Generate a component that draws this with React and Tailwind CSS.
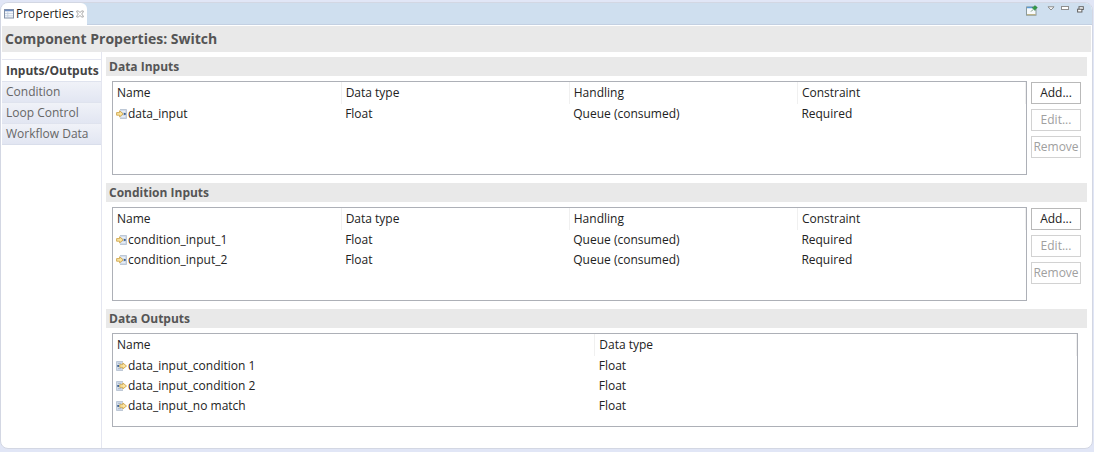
import React from "react";

function TableIcon() {
  return (
    <svg className="shrink-0" width="10" height="10" viewBox="0 0 10 10" aria-hidden="true">
      <rect x="0.5" y="0.5" width="9" height="8.5" fill="#f4f7fb" stroke="#8391a8" />
      <path d="M1 1.5h8" stroke="#6d8dc0" strokeWidth="1.4" />
      <path d="M1 4.5h8M1 6.8h8M3.8 2.5v6.3" stroke="#b9c5d8" strokeWidth="0.7" />
    </svg>
  );
}

function CloseIcon() {
  return (
    <svg width="8" height="8" viewBox="0 0 9 8" aria-hidden="true">
      <path
        d="M0.8 0.6h2l1.7 1.8 1.7-1.8h2v1L6.4 4l1.8 2.4v1h-2L4.5 5.6 2.8 7.4h-2v-1L2.6 4 0.8 1.6z"
        fill="#fff"
        stroke="#858585"
        strokeWidth="0.8"
      />
    </svg>
  );
}

function PinIcon() {
  return (
    <svg width="12" height="11" viewBox="0 0 12 11" aria-hidden="true">
      <rect x="0.5" y="2" width="9.5" height="8.2" fill="#f7fafc" stroke="#8a9a9c" />
      <path d="M1 2.5h6" stroke="#5b9bd5" strokeWidth="1.6" />
      <path d="M1 9.7h8.6" stroke="#b5a56b" strokeWidth="0.9" />
      <path d="M5 6.6l2.2-2.2" stroke="#6a8f72" strokeWidth="0.9" />
      <path d="M6 2.6l1.4-.4L8.8.6 11.4 2.6 9.6 4.2 9 5.6z" fill="#2f9a46" stroke="#39824a" strokeWidth="0.5" />
    </svg>
  );
}

function MenuIcon() {
  return (
    <svg width="8" height="5" viewBox="0 0 8 5" aria-hidden="true">
      <path d="M1 0.8h6L4 4z" fill="#fff" stroke="#8a8a8a" strokeWidth="1" />
    </svg>
  );
}

function MinimizeIcon() {
  return (
    <svg width="8" height="4" viewBox="0 0 8 4" aria-hidden="true">
      <rect x="0.5" y="0.5" width="7" height="3" fill="#fff" stroke="#8f8f8f" />
    </svg>
  );
}

function RestoreIcon() {
  return (
    <svg width="7" height="7" viewBox="0 0 7 7" aria-hidden="true">
      <rect x="2" y="0.7" width="4.3" height="2.8" fill="#fff" stroke="#606060" strokeWidth="1" />
      <rect x="0.6" y="3.2" width="4.3" height="2.8" fill="#fff" stroke="#606060" strokeWidth="1" />
    </svg>
  );
}

function InputIcon() {
  return (
    <svg className="shrink-0" width="11" height="10" viewBox="0 0 11 10" aria-hidden="true">
      <rect x="4" y="0.2" width="6.8" height="9.6" fill="#d3deed" />
      <path d="M4 0.6h6.4M4 9.4h6.4M10.4 0.6v8.8" stroke="#b1bccc" strokeWidth="0.8" fill="none" />
      <path d="M5.6 2.4h3.4M5.6 7.6h3.4" stroke="#eef2f8" strokeWidth="0.9" />
      <rect x="7.8" y="4" width="1.9" height="1.9" fill="#3d608f" />
      <path d="M0.6 3.6h3V1.8L7.2 4.9 3.6 7.9V6.2h-3z" fill="#fbe6a2" stroke="#cfa54c" strokeWidth="0.9" />
    </svg>
  );
}

function OutputIcon() {
  return (
    <svg className="shrink-0" width="11" height="10" viewBox="0 0 11 10" aria-hidden="true">
      <rect x="0.2" y="0.2" width="6.8" height="9.6" fill="#d3deed" />
      <path d="M7 0.6H0.6v8.8H7" stroke="#b1bccc" strokeWidth="0.8" fill="none" />
      <path d="M2 2.4h3.4M2 7.6h3.4" stroke="#9eacc0" strokeWidth="0.8" />
      <rect x="1.3" y="4" width="1.9" height="1.9" fill="#3d608f" />
      <path d="M3.8 3.7h3V1.9l3.7 3.1-3.7 3V6.3h-3z" fill="#fbe6a2" stroke="#cfa54c" strokeWidth="0.9" />
    </svg>
  );
}

function SectionTitle({ children }) {
  return (
    <h2 className="h-[19px] bg-[#e9e9e9] pl-[3px] leading-[19px] font-bold text-[#555]">
      {children}
    </h2>
  );
}

function DataTable({ label, columns, rows, icon: Icon }) {
  return (
    <div className="h-[94px] min-w-0 flex-1 border border-[#adb0b7] bg-white">
      <table aria-label={label} className="w-full table-fixed border-collapse text-left">
        <thead>
          <tr className="h-[22px]">
            {columns.map((c) => (
              <th key={c} className="border-r border-[#f0f0f0] p-0 pl-1 font-normal leading-[22px]">
                {c}
              </th>
            ))}
          </tr>
        </thead>
        <tbody>
          {rows.map((row) => (
            <tr key={row[0]} className="h-5">
              {row.map((cell, i) => (
                <td key={i} className={i === 0 ? "p-0 pl-[3px]" : "p-0 pl-1"}>
                  <span className="flex items-center gap-px whitespace-nowrap leading-5">
                    {i === 0 && <Icon />}
                    {cell}
                  </span>
                </td>
              ))}
            </tr>
          ))}
        </tbody>
      </table>
    </div>
  );
}

function ActionButton({ children, disabled }) {
  return (
    <button
      type="button"
      disabled={disabled}
      className="h-[22px] border border-[#b9b9b9] bg-white text-center leading-5 disabled:border-[#d2d2d2] disabled:text-[#a0a0a0]"
    >
      {children}
    </button>
  );
}

function InputSection({ title, rows }) {
  return (
    <section>
      <SectionTitle>{title}</SectionTitle>
      <div className="mt-[5px] flex gap-1 pr-[6px] pl-[6px]">
        <DataTable
          label={title}
          columns={["Name", "Data type", "Handling", "Constraint"]}
          rows={rows}
          icon={InputIcon}
        />
        <div className="flex w-[50px] flex-col gap-[5px] pt-px">
          <ActionButton>Add...</ActionButton>
          <ActionButton disabled>Edit...</ActionButton>
          <ActionButton disabled>Remove</ActionButton>
        </div>
      </div>
    </section>
  );
}

const pages = ["Inputs/Outputs", "Condition", "Loop Control", "Workflow Data"];

export default function App() {
  return (
    <div className="bg-[#e1e6f6] pt-[2px] pr-px pb-[3px] font-['Open_Sans','Noto_Sans',sans-serif] text-[12px] text-[#222]">
      <div className="overflow-hidden rounded-lg border border-[#d3d7e3] bg-white">
        <header className="flex h-[22px] justify-between border-b border-[#c3d0e2] bg-[#cfdfef]">
          <div className="flex h-[22px] items-center gap-[2px] rounded-tr-md bg-white pr-[3px] pl-[3px]">
            <TableIcon />
            <span className="leading-[22px]">Properties</span>
            <button type="button" aria-label="Close Properties">
              <CloseIcon />
            </button>
          </div>
          <div className="flex items-start pt-[2px] pr-2">
            <button type="button" aria-label="Pin view" className="mr-[9px]">
              <PinIcon />
            </button>
            <button type="button" aria-label="View menu" className="mr-[6px] pt-px">
              <MenuIcon />
            </button>
            <button type="button" aria-label="Minimize" className="mr-2 pt-px">
              <MinimizeIcon />
            </button>
            <button type="button" aria-label="Restore" className="pt-px">
              <RestoreIcon />
            </button>
          </div>
        </header>

        <h1 className="mt-px mr-px ml-px h-[26px] bg-[#e9e9e9] pl-[3px] text-[14px] leading-[26px] font-bold text-[#555]">
          Component Properties: Switch
        </h1>

        <div className="flex pl-px">
          <nav aria-label="Property pages" className="w-[100px] shrink-0 border-r border-[#e4e6f0] pt-[7px]">
            {pages.map((p, i) => (
              <a
                key={p}
                href="#"
                aria-current={i === 0 ? "page" : undefined}
                className={
                  i === 0
                    ? "block h-[22px] border-t border-[#e4e6f0] pl-1 leading-[21px] font-bold whitespace-nowrap text-[#444]"
                    : "block h-[21px] border-t border-[#dfe3ee] bg-linear-to-b from-[#f0f2f8] to-[#e2e6f2] pl-1 leading-5 whitespace-nowrap text-[#666]"
                }
              >
                {p}
              </a>
            ))}
            <div className="h-px bg-[#d9deeb]" />
          </nav>

          <main className="flex min-w-0 flex-1 flex-col gap-2 pt-[5px] pr-[5px] pb-[21px] pl-1">
            <InputSection
              title="Data Inputs"
              rows={[["data_input", "Float", "Queue (consumed)", "Required"]]}
            />
            <InputSection
              title="Condition Inputs"
              rows={[
                ["condition_input_1", "Float", "Queue (consumed)", "Required"],
                ["condition_input_2", "Float", "Queue (consumed)", "Required"],
              ]}
            />
            <section>
              <SectionTitle>Data Outputs</SectionTitle>
              <div className="mt-[5px] flex pr-[9px] pl-[6px]">
                <DataTable
                  label="Data Outputs"
                  columns={["Name", "Data type"]}
                  rows={[
                    ["data_input_condition 1", "Float"],
                    ["data_input_condition 2", "Float"],
                    ["data_input_no match", "Float"],
                  ]}
                  icon={OutputIcon}
                />
              </div>
            </section>
          </main>
        </div>
      </div>
    </div>
  );
}
